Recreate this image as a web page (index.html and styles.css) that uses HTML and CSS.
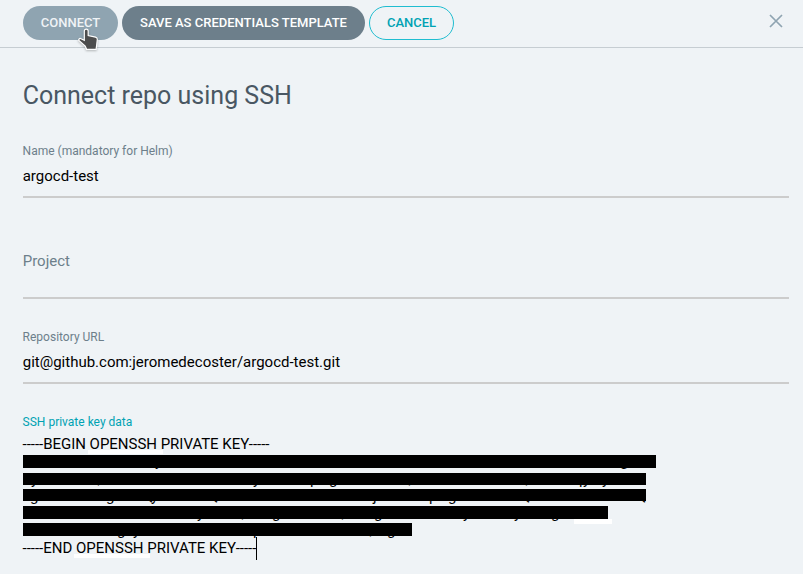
FILE: index.html
```html
<!DOCTYPE html>
<html lang="en">
<head>
<meta charset="utf-8">
<title>Connect repo using SSH</title>
<link rel="stylesheet" href="styles.css">
</head>
<body>
<header class="toolbar">
  <button class="btn btn-hover">CONNECT</button>
  <button class="btn btn-base">SAVE AS CREDENTIALS TEMPLATE</button>
  <button class="btn btn-outline">CANCEL</button>
  <svg class="close" width="14" height="14" viewBox="0 0 14 14"><path d="M1 1l12 12M13 1L1 13"/></svg>
  <svg class="pointer" width="22" height="24" viewBox="0 0 22 24"><path d="M8.3 2.2c1.2 0 1.9.9 1.9 2v4.3l7.3 1.7c1.2.3 1.9 1.1 1.8 2.4l-.6 5.1-.6 4.6H8.6l-1.4-3.2-6.3-5.6c-.5-1 .3-2.2 1.6-2l3.8 1.7V4.2c0-1.1.8-2 2-2z"/></svg>
</header>
<main class="panel">
  <h1>Connect repo using SSH</h1>
  <div class="field field-name">
    <label>Name (mandatory for Helm)</label>
    <div class="value">argocd-test</div>
  </div>
  <div class="field field-project">
    <div class="placeholder">Project</div>
  </div>
  <div class="field field-url">
    <label>Repository URL</label>
    <div class="value">git@github.com:jeromedecoster/argocd-test.git</div>
  </div>
  <div class="key">
    <label>SSH private key data</label>
    <svg class="key-data" width="766" height="132" viewBox="23 434 766 132">
      <path class="patch" d="M88 450h75v4H88zM74 554h76v4H74zM574 519h38v5h-38z"/>
      <text x="22.5" y="449" textLength="247">-----BEGIN OPENSSH PRIVATE KEY-----</text>
      <text x="31 90 253 310 329 401 518 579 583 602" y="483.7">yQypgQQpyy</text>
      <path class="gap" d="M23 468h633v5H23z"/>
      <text x="155 620" y="465.5">yg</text>
      <text x="30 106 143 151 208 373 429 448 520 636" y="500.5">ggQyQjpgQQ</text>
      <text x="197 234 272 334 374 463 514 551" y="517.7">yQgQgyyg</text>
      <text x="117 133 253 362 387" y="534.7">gypQg</text>
      <path d="M23 455h633v13H23zM23 473h623v12H23zM23 489h623v12H23zM23 506h585v13H23zM23 523h389v13H23z"/>
      <text x="22.5" y="553">-----END OPENSSH PRIVATE KEY-----</text>
      <path d="M256 537h1v23h-1z"/>
    </svg>
  </div>
</main>
</body>
</html>
```
FILE: styles.css
```css
* { box-sizing: border-box; }
body {
  margin: 0;
  height: 574px;
  overflow: hidden;
  background: #eff3f6;
  font-family: Roboto, sans-serif;
  font-size: 15px;
  color: #000;
}
.toolbar {
  position: relative;
  display: flex;
  gap: 4px;
  height: 48px;
  padding: 6px 20px 0 23px;
  border-bottom: 1px solid #c6cdd2;
}
.btn {
  height: 34px;
  padding: 0;
  border: 1px solid transparent;
  border-radius: 17px;
  font: 500 13px/32px Roboto, sans-serif;
  text-align: center;
  white-space: nowrap;
}
.btn-hover { width: 95px; background: #8fa4b1; color: #eff3f6; }
.btn-base { width: 243px; background: #6d7f8b; color: #fff; }
.btn-outline { width: 85px; background: transparent; border-color: #1fbdd0; color: #00a2b3; }
.close {
  margin: 8px 0 0 auto;
  fill: none;
  stroke: #8fa4b1;
  stroke-width: 1.7;
}
.pointer {
  position: absolute;
  left: 78px;
  top: 27px;
  fill: #4d4d4d;
  stroke: #fff;
  stroke-width: 1.2;
  filter: drop-shadow(0 1px 1px rgba(0, 0, 0, .25));
}
.panel { padding: 31px 14px 0 23px; }
h1 {
  margin: 0 0 0 -.3px;
  height: 34px;
  font-size: 25px;
  font-weight: 400;
  line-height: 34px;
  color: #495763;
}
label {
  display: block;
  height: 16px;
  margin-left: -.4px;
  font-size: 12px;
  line-height: 16px;
  color: #6d7f8b;
}
.field { border-bottom: 2px solid #ccc; }
.field-name { height: 55px; margin-top: 30px; }
.field-project { height: 101px; padding-top: 53px; }
.field-url { height: 55px; margin-top: 30px; }
.value { margin-left: -.3px; padding-top: 7px; line-height: 20px; }
.placeholder { margin-left: -.3px; line-height: 20px; color: #6d7f8b; }
.key { margin-top: 30px; }
.key label { color: #00a2b3; }
.key-data { display: block; margin-top: 4px; overflow: visible; }
.patch { fill: #fff; }
.gap { fill: #eff3f6; }
```
